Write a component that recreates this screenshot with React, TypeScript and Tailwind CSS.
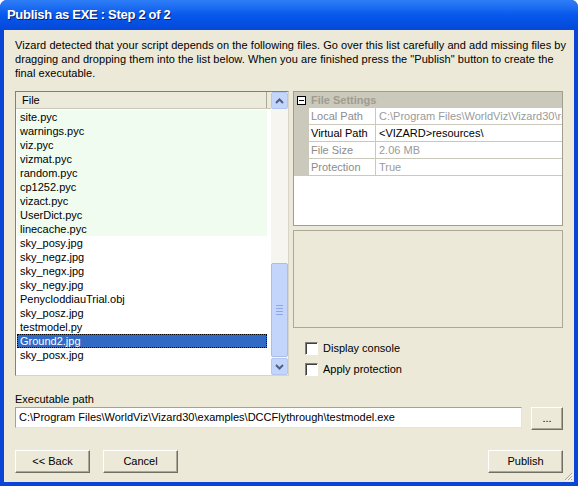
const files = [
  { name: 'site.pyc', dep: true },
  { name: 'warnings.pyc', dep: true },
  { name: 'viz.pyc', dep: true },
  { name: 'vizmat.pyc', dep: true },
  { name: 'random.pyc', dep: true },
  { name: 'cp1252.pyc', dep: true },
  { name: 'vizact.pyc', dep: true },
  { name: 'UserDict.pyc', dep: true },
  { name: 'linecache.pyc', dep: true },
  { name: 'sky_posy.jpg' },
  { name: 'sky_negz.jpg' },
  { name: 'sky_negx.jpg' },
  { name: 'sky_negy.jpg' },
  { name: 'PenycloddiauTrial.obj' },
  { name: 'sky_posz.jpg' },
  { name: 'testmodel.py' },
  { name: 'Ground2.jpg', selected: true },
  { name: 'sky_posx.jpg' },
];

const props = [
  { label: 'Local Path', value: 'C:\\Program Files\\WorldViz\\Vizard30\\resources\\Ground2.jpg', active: false },
  { label: 'Virtual Path', value: '<VIZARD>resources\\', active: true },
  { label: 'File Size', value: '2.06 MB', active: false },
  { label: 'Protection', value: 'True', active: false },
];

function Chevron({ up }: { up?: boolean }) {
  return (
    <svg width="9" height="6" viewBox="0 0 9 6">
      <path
        d={up ? 'M1 5L4.5 1.5L8 5' : 'M1 1L4.5 4.5L8 1'}
        fill="none"
        stroke="#4D6185"
        strokeWidth="2"
      />
    </svg>
  );
}

function XpButton({ label, width = 'w-[75px]' }: { label: string; width?: string }) {
  return (
    <button
      className={`${width} h-[23px] shrink-0 bg-[#ECE9D8] border border-t-white border-l-white border-r-[#716F64] border-b-[#716F64] shadow-[inset_-1px_-1px_0_#ACA899] text-[11px] text-black flex items-center justify-center`}
    >
      {label}
    </button>
  );
}

function Checkbox({ label }: { label: string }) {
  return (
    <label className="flex items-center gap-[5px] h-[13px]">
      <span className="w-[13px] h-[13px] bg-white border border-t-[#808080] border-l-[#808080] border-r-white border-b-white shadow-[inset_1px_1px_0_#404040]" />
      <span className="text-[11px] text-black leading-none">{label}</span>
    </label>
  );
}

export default function App() {
  return (
    <div
      className="w-[578px] h-[486px] bg-[#0B45D6] rounded-t-[7px] flex flex-col overflow-hidden select-none"
      style={{ fontFamily: '"Liberation Sans", Arial, sans-serif' }}
    >
      {/* Title bar */}
      <div className="h-[30px] shrink-0 bg-linear-to-b from-[#2E7EF7] via-[#0758EC] to-[#0448D8] flex items-center pl-[7px]">
        <span className="text-white font-bold text-[13px] tracking-[-0.3px] [text-shadow:1px_1px_0_#0A1E6E]">
          Publish as EXE : Step 2 of 2
        </span>
      </div>

      {/* Client area */}
      <div className="relative flex-1 min-w-0 mx-[4px] mb-[4px] bg-[#ECE9D8] pl-[11px] pr-[11px] pt-[8px] pb-[11px] flex flex-col text-[11px] text-black overflow-hidden">
        <p className="leading-[14px] whitespace-nowrap tracking-[0.05px]">
          Vizard detected that your script depends on the following files. Go over this list carefully and add missing files by
          <br />
          dragging and dropping them into the list below. When you are finished press the "Publish" button to create the
          <br />
          final executable.
        </p>

        <div className="mt-[11px] h-[285px] flex gap-[4px] min-w-0">
          {/* File list */}
          <div className="w-[274px] shrink-0 border border-t-[#808080] border-l-[#808080] border-r-[#D8D5C8] border-b-[#D8D5C8] bg-white flex">
            <div className="flex-1 flex flex-col">
              <div className="h-[17px] shrink-0 bg-[#EBEADB] border-b border-[#CBC7B8] flex">
                <div className="w-[251px] border-r border-[#ACA899] pl-[6px] flex items-center">File</div>
                <div className="flex-1" />
              </div>
              <div className="pt-[1px] pl-[1px]">
                {files.map((f) => (
                  <div
                    key={f.name}
                    className={`w-[250px] h-[14px] leading-[14px] pl-[3px] ${
                      f.selected
                        ? 'bg-[#316AC5] text-white outline-1 outline-dotted outline-[#000] -outline-offset-1'
                        : f.dep
                        ? 'bg-[#F0FCF0]'
                        : ''
                    }`}
                  >
                    {f.name}
                  </div>
                ))}
              </div>
            </div>

            {/* Scrollbar */}
            <div className="w-[17px] bg-[#F6F5F0] flex flex-col">
              <div className="h-[17px] shrink-0 bg-[#C4D5FC] border border-[#B2C6F2] rounded-[2px] flex items-center justify-center">
                <Chevron up />
              </div>
              <div className="flex-1 flex flex-col justify-end pb-[1px]">
                <div className="h-[94px] bg-[#C4D5FC] border border-[#A9BDEB] rounded-[2px] flex flex-col items-center justify-center gap-[2px]">
                  <span className="w-[7px] h-px bg-[#8EA6E3]" />
                  <span className="w-[7px] h-px bg-[#8EA6E3]" />
                  <span className="w-[7px] h-px bg-[#8EA6E3]" />
                  <span className="w-[7px] h-px bg-[#8EA6E3]" />
                </div>
              </div>
              <div className="h-[17px] shrink-0 bg-[#C4D5FC] border border-[#B2C6F2] rounded-[2px] flex items-center justify-center">
                <Chevron />
              </div>
            </div>
          </div>

          {/* Right column */}
          <div className="flex-1 min-w-0 flex flex-col">
            <div className="h-[135px] border border-[#A09D92] bg-white flex flex-col overflow-hidden">
              <div className="h-[16px] shrink-0 bg-[#CBC8BC] flex items-center pl-[3px] gap-[5px]">
                <span className="w-[9px] h-[9px] border border-black bg-white flex items-center justify-center">
                  <span className="w-[5px] h-px bg-black" />
                </span>
                <span className="font-bold text-[#9F9C90]">File Settings</span>
              </div>
              {props.map((p) => (
                <div key={p.label} className="h-[17px] flex min-w-0">
                  <div className="w-[15px] shrink-0 bg-[#CBC8BC]" />
                  <div
                    className={`w-[67px] shrink-0 border-b border-r border-[#CBC8BC] pl-[2px] leading-[16px] ${
                      p.active ? 'text-black' : 'text-[#8C8C8C]'
                    }`}
                  >
                    {p.label}
                  </div>
                  <div
                    className={`flex-1 min-w-0 border-b border-[#CBC8BC] pl-[3px] leading-[16px] whitespace-nowrap overflow-hidden ${
                      p.active ? 'text-black' : 'text-[#9A9A9A]'
                    }`}
                  >
                    {p.value}
                  </div>
                </div>
              ))}
              <div className="flex-1" />
            </div>
            <div className="mt-[4px] h-[98px] border border-[#ACA899] bg-[#ECE9D8]" />
            <div className="mt-[14px] pl-[12px] flex flex-col gap-[8px]">
              <Checkbox label="Display console" />
              <Checkbox label="Apply protection" />
            </div>
          </div>
        </div>

        <div className="mt-[16px] h-[14px] leading-[14px]">Executable path</div>
        <div className="mt-[1px] flex gap-[9px] min-w-0">
          <div className="flex-1 min-w-0 h-[21px] bg-white border border-t-[#A0A0A0] border-l-[#A0A0A0] border-r-[#E6E4DA] border-b-[#E6E4DA] flex items-center pl-[3px] whitespace-nowrap overflow-hidden">
            C:\Program Files\WorldViz\Vizard30\examples\DCCFlythrough\testmodel.exe
          </div>
          <XpButton label="..." width="w-[32px]" />
        </div>

        <div className="mt-[20px] flex items-center">
          <XpButton label="<< Back" />
          <div className="ml-[13px]">
            <XpButton label="Cancel" />
          </div>
          <div className="ml-auto">
            <XpButton label="Publish" />
          </div>
        </div>

        {/* resize grip */}
        <svg className="absolute right-[1px] bottom-[1px]" width="10" height="10" viewBox="0 0 10 10">
          <path d="M9 2L2 9M9 5L5 9M9 8L8 9" stroke="#ACA899" strokeWidth="1" />
          <path d="M10 3L3 10M10 6L6 10" stroke="#FFFFFF" strokeWidth="1" />
        </svg>
      </div>
    </div>
  );
}
